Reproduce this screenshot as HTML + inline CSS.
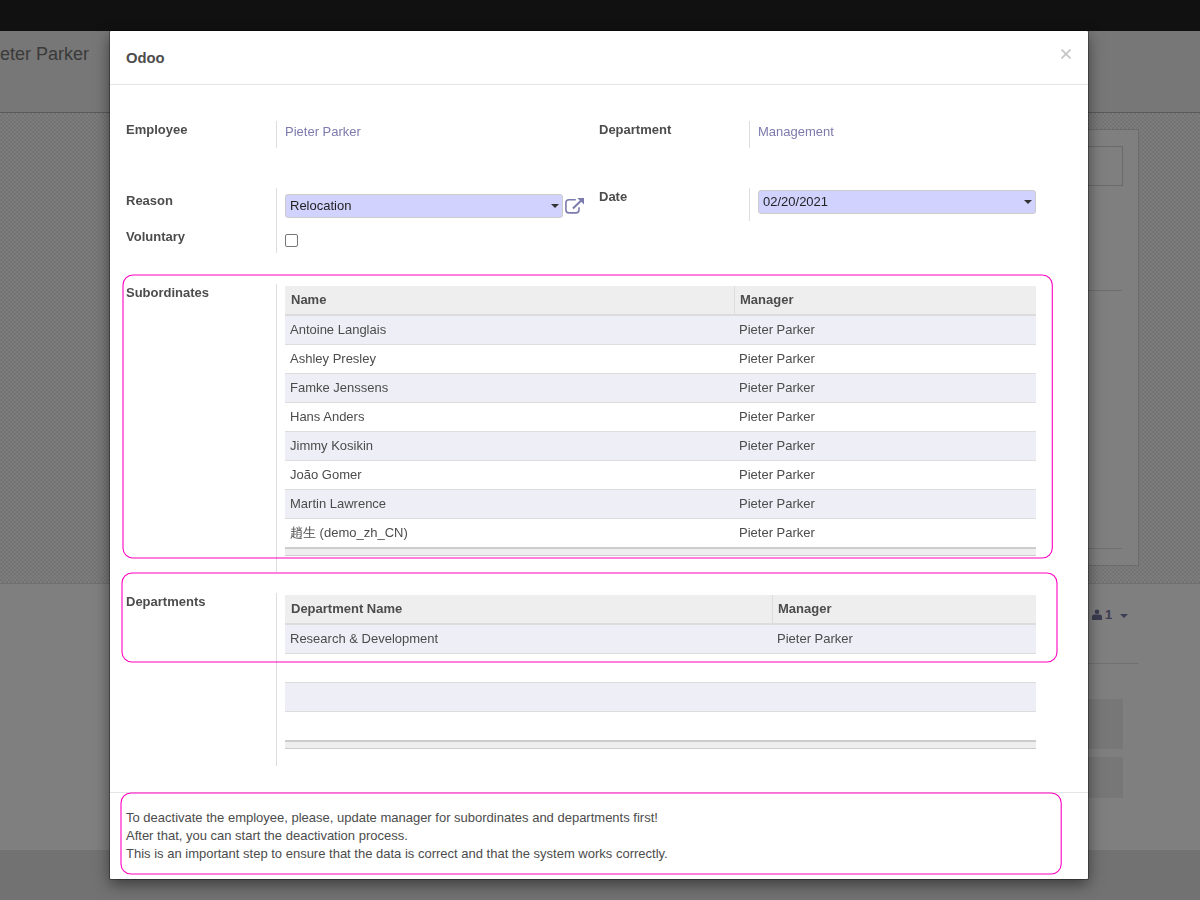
<!DOCTYPE html>
<html><head><meta charset="utf-8">
<style>
*{box-sizing:border-box;margin:0;padding:0}
html,body{width:1200px;height:900px;overflow:hidden}
body{position:relative;background:#7b7b7b;font-family:"Liberation Sans",sans-serif;font-size:13px;color:#4c4c4c}
.a{position:absolute}
.t{position:absolute;white-space:nowrap;line-height:18px}
.b{font-weight:bold}
/* background page */
#nav{left:0;top:0;width:1200px;height:31px;background:#111}
#cp{left:0;top:31px;width:1200px;height:82px;background:#777;border-bottom:1px solid #5a5a5a}
#chk{left:0;top:113px;width:1200px;height:471px;border-bottom:1px solid #6f6f6f;background-color:#767676;background-image:conic-gradient(#737373 25%,#7d7d7d 0 50%,#737373 0 75%,#7d7d7d 0);background-size:4px 4px}
#sheet{left:300px;top:129px;width:839px;height:437px;background:#7f7f7f;border:1px solid #6b6b6b}
#chat{left:0;top:584px;width:1200px;height:266px;background:#7f7f7f}
#bot{left:0;top:850px;width:1200px;height:50px;background:#727272}
/* modal */
#modal{left:110px;top:31px;width:978px;height:848px;background:#fff;box-shadow:0 0 0 1px rgba(0,0,0,.3),0 5px 15px rgba(0,0,0,.5);border-radius:1px}
.sep{position:absolute;width:1px;background:#ddd}
.sel{position:absolute;background:#d2d2ff;border:1px solid #ccc;border-radius:3px}
.caret{position:absolute;width:0;height:0;border-left:4px solid transparent;border-right:4px solid transparent;border-top:4px solid #333}
.link{color:#7c7bad}
.pink{position:absolute;border:2px solid #ff70d2;border-radius:10px}
table{border-collapse:collapse}
.tbl{position:absolute;left:175px;width:751px}
.hd{position:absolute;left:0;top:0;width:751px;height:30px;background:#eee;border-bottom:2px solid #dcdcdc}
.row{position:absolute;left:0;width:751px;height:29px;border-bottom:1px solid #ddd}
.odd{background:#eeeef6}
.ft{position:absolute;left:0;width:751px;height:9px;background:#eee;border-top:2px solid #ccc;border-bottom:1px solid #ccc}
.cs{position:absolute;top:0;width:1px;height:28px;background:#ddd}
</style></head><body>
<div id="nav" class="a"></div>
<div id="cp" class="a"></div>
<div class="t" style="left:0;top:42px;font-size:18px;line-height:24px;color:#3a3a3a">eter Parker</div>
<div id="chk" class="a"></div>
<div id="sheet" class="a"></div>
<div id="chat" class="a"></div>
<div id="bot" class="a"></div>
<div class="a" style="left:600px;top:146px;width:523px;height:40px;border:1px solid #6a6a6a"></div>
<div class="a" style="left:600px;top:290px;width:522px;height:1px;background:#6e6e6e"></div>
<div class="a" style="left:600px;top:548px;width:522px;height:1px;background:#6e6e6e"></div>
<svg class="a" style="left:1092px;top:609px" width="11" height="11" viewBox="0 0 11 11"><circle cx="5" cy="2.8" r="2.3" fill="#3c3c52"/><path d="M0 11V7.8Q0 5.6 2.4 5.6H7.6Q10 5.6 10 7.8V11Z" fill="#3c3c52"/></svg>
<div class="t b" style="left:1105px;top:606px;font-size:13px;line-height:18px;color:#3c3c52">1</div>
<div class="a" style="left:1120px;top:614px;width:0;height:0;border-left:4px solid transparent;border-right:4px solid transparent;border-top:4px solid #3c3c52"></div>
<div class="a" style="left:600px;top:663px;width:539px;height:1px;background:#717171"></div>
<div class="a" style="left:600px;top:699px;width:523px;height:50px;background:#777"></div>
<div class="a" style="left:600px;top:757px;width:523px;height:41px;background:#777"></div>


<div id="modal" class="a">
<div class="t b" style="left:16px;top:17px;font-size:14.8px;line-height:20px">Odoo</div>
<div class="a" style="left:0;top:53px;width:978px;height:1px;background:#e5e5e5"></div>
<svg class="a" style="left:951px;top:18px" width="10" height="10" viewBox="0 0 10 10"><path d="M0.5 0.5L9.5 9.5M9.5 0.5L0.5 9.5" stroke="#c4c4c4" stroke-width="1.6"/></svg>
<div class="a" style="left:0;top:0;width:978px;height:761px;will-change:transform">
<div class="t b" style="left:16px;top:90px">Employee</div>
<div class="sep" style="left:166px;top:90px;height:27px"></div>
<div class="t link" style="left:175px;top:92px">Pieter Parker</div>
<div class="t b" style="left:489px;top:90px">Department</div>
<div class="sep" style="left:639px;top:90px;height:27px"></div>
<div class="t link" style="left:648px;top:92px">Management</div>
<div class="t b" style="left:16px;top:161px">Reason</div>
<div class="sep" style="left:166px;top:157px;height:65px"></div>
<div class="sel" style="left:175px;top:163px;width:278px;height:24px"></div>
<div class="t" style="left:180px;top:166px;color:#222">Relocation</div>
<div class="caret" style="left:441px;top:173px"></div>
<svg class="a" style="left:454px;top:166px" width="22" height="18" viewBox="0 0 22 18"><path d="M11.8 2.8H5a3.1 3.1 0 0 0-3.1 3.1v6.9a3.1 3.1 0 0 0 3.1 3.1h6.9a3.1 3.1 0 0 0 3.1-3.1V10.2" fill="none" stroke="#7c7bad" stroke-width="1.6"/><path d="M8.9 11.4L17 3.8" stroke="#7c7bad" stroke-width="2.1"/><path d="M13.3 1H20V7.6Z" fill="#7c7bad"/></svg>
<div class="t b" style="left:489px;top:157px">Date</div>
<div class="sep" style="left:639px;top:157px;height:33px"></div>
<div class="sel" style="left:648px;top:159px;width:278px;height:24px"></div>
<div class="t" style="left:653px;top:162px;color:#222">02/20/2021</div>
<div class="caret" style="left:914px;top:169px"></div>
<div class="t b" style="left:16px;top:197px">Voluntary</div>
<div class="a" style="left:175px;top:203px;width:13px;height:13px;border:1px solid #767676;border-radius:2px;background:#fff"></div>
<div class="t b" style="left:16px;top:253px">Subordinates</div>
<div class="sep" style="left:166px;top:253px;height:288px"></div>
<div class="a" style="left:175px;top:255px;width:751px;height:271px"><div class="hd"></div><div class="cs" style="left:449px"></div><div class="t b" style="left:6px;top:5px">Name</div><div class="t b" style="left:455px;top:5px">Manager</div><div class="row odd" style="top:30px"></div><div class="t" style="left:5px;top:35px">Antoine Langlais</div><div class="t" style="left:454px;top:35px">Pieter Parker</div><div class="row" style="top:59px"></div><div class="t" style="left:5px;top:64px">Ashley Presley</div><div class="t" style="left:454px;top:64px">Pieter Parker</div><div class="row odd" style="top:88px"></div><div class="t" style="left:5px;top:93px">Famke Jenssens</div><div class="t" style="left:454px;top:93px">Pieter Parker</div><div class="row" style="top:117px"></div><div class="t" style="left:5px;top:122px">Hans Anders</div><div class="t" style="left:454px;top:122px">Pieter Parker</div><div class="row odd" style="top:146px"></div><div class="t" style="left:5px;top:151px">Jimmy Kosikin</div><div class="t" style="left:454px;top:151px">Pieter Parker</div><div class="row" style="top:175px"></div><div class="t" style="left:5px;top:180px">João Gomer</div><div class="t" style="left:454px;top:180px">Pieter Parker</div><div class="row odd" style="top:204px"></div><div class="t" style="left:5px;top:209px">Martin Lawrence</div><div class="t" style="left:454px;top:209px">Pieter Parker</div><div class="row" style="top:233px"></div><div class="t" style="left:5px;top:238px">趙生 (demo_zh_CN)</div><div class="t" style="left:454px;top:238px">Pieter Parker</div><div class="ft" style="top:261px"></div></div>
<div class="t b" style="left:16px;top:562px">Departments</div>
<div class="sep" style="left:166px;top:562px;height:173px"></div>
<div class="a" style="left:175px;top:564px;width:751px;height:160px"><div class="hd"></div><div class="cs" style="left:487px"></div><div class="t b" style="left:6px;top:5px">Department Name</div><div class="t b" style="left:493px;top:5px">Manager</div><div class="row odd" style="top:30px"></div><div class="row" style="top:59px"></div><div class="row odd" style="top:88px"></div><div class="row" style="top:117px"></div><div class="t" style="left:5px;top:35px">Research &amp; Development</div><div class="t" style="left:492px;top:35px">Pieter Parker</div><div class="ft" style="top:145px"></div></div>
</div>
<div class="a" style="left:0;top:761px;width:978px;height:1px;background:#e5e5e5"></div>
<div class="t" style="left:16px;top:778px">To deactivate the employee, please, update manager for subordinates and departments first!<br>After that, you can start the deactivation process.<br>This is an important step to ensure that the data is correct and that the system works correctly.</div>
</div>
<svg class="a" style="left:0;top:0" width="1200" height="900" viewBox="0 0 1200 900" fill="none" stroke="#ff00c0" stroke-width="1.1">
<rect x="123" y="275" width="929.3" height="283" rx="10"/>
<rect x="122" y="573" width="935" height="89" rx="10"/>
<rect x="121" y="793" width="940.2" height="81" rx="10"/>
</svg>
</body></html>
